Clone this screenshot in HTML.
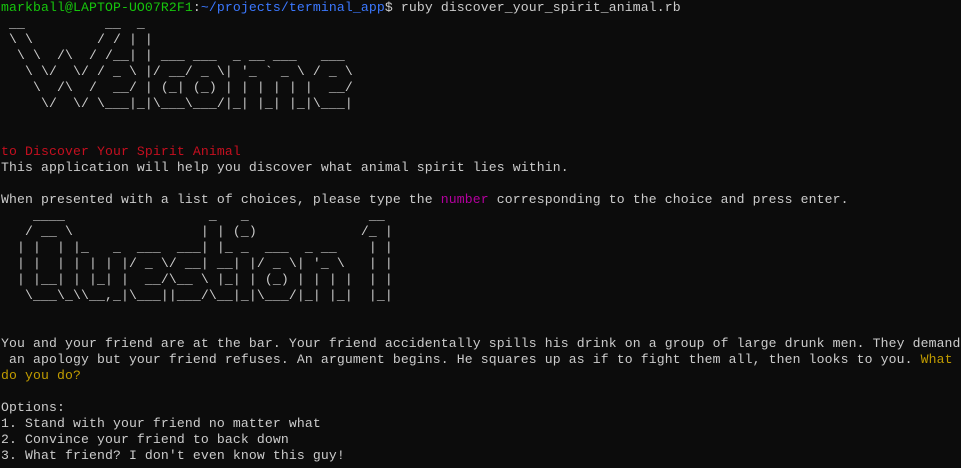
<!DOCTYPE html>
<html><head><meta charset="utf-8"><style>
html,body{margin:0;padding:0;background:#0c0c0c;width:961px;height:468px;overflow:hidden}
pre{margin:0;padding:0 0 0 1px;font-family:"Liberation Mono",monospace;font-size:13.13px;letter-spacing:0.12px;line-height:16px;color:#cccccc;white-space:pre}
.g{color:#16c60c}.b{color:#3b78ff}.r{color:#c50f1f}.p{color:#b4009e}.y{color:#c19c00}
</style></head><body><pre><span class="g">markball@LAPTOP-UO07R2F1</span>:<span class="b">~/projects/terminal_app</span>$ ruby discover_your_spirit_animal.rb
 __          __  _
 \ \        / / | |
  \ \  /\  / /__| | ___ ___  _ __ ___   ___
   \ \/  \/ / _ \ |/ __/ _ \| '_ ` _ \ / _ \
    \  /\  /  __/ | (_| (_) | | | | | |  __/
     \/  \/ \___|_|\___\___/|_| |_| |_|\___|


<span class="r">to Discover Your Spirit Animal</span>
This application will help you discover what animal spirit lies within.

When presented with a list of choices, please type the <span class="p">number</span> corresponding to the choice and press enter.
    ____                  _   _               __
   / __ \                | | (_)             /_ |
  | |  | |_   _  ___  ___| |_ _  ___  _ __    | |
  | |  | | | | |/ _ \/ __| __| |/ _ \| '_ \   | |
  | |__| | |_| |  __/\__ \ |_| | (_) | | | |  | |
   \___\_\\__,_|\___||___/\__|_|\___/|_| |_|  |_|


You and your friend are at the bar. Your friend accidentally spills his drink on a group of large drunk men. They demand
 an apology but your friend refuses. An argument begins. He squares up as if to fight them all, then looks to you. <span class="y">What</span>
<span class="y">do you do?</span>

Options:
1. Stand with your friend no matter what
2. Convince your friend to back down
3. What friend? I don't even know this guy!
</pre></body></html>
